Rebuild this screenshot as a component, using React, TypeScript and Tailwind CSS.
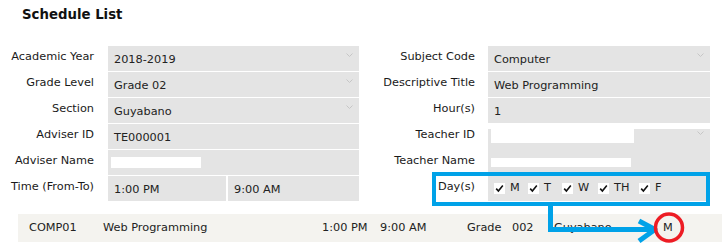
import type { ReactNode } from 'react';

// ─────────────────────────────────────────────────────────────────────────────
// Schedule List — filter form with a single result row and annotations
// ─────────────────────────────────────────────────────────────────────────────

const font = { fontFamily: '"DejaVu Sans", Verdana, sans-serif' };

function Chevron() {
  return (
    <svg width="7" height="5" viewBox="0 0 7 5" className="absolute right-[6px] top-[7px]">
      <polyline points="0.5,0.5 3.5,3.5 6.5,0.5" fill="none" stroke="#c6c6c6" strokeWidth="1" />
    </svg>
  );
}

function Label({ children, right }: { children: ReactNode; right?: boolean }) {
  return (
    <div
      className={`text-right pt-[4px] text-[11.3px] leading-[14px] text-[#1a1a1a] ${right ? 'pr-[13px]' : 'pr-[14px]'}`}
    >
      {children}
    </div>
  );
}

function Field({ children, select }: { children?: ReactNode; select?: boolean }) {
  return (
    <div className="relative h-[25px] bg-[#e4e4e4] pl-[6px] pt-[7px] text-[11.3px] leading-[14px] text-[#222]">
      {children}
      {select && <Chevron />}
    </div>
  );
}

function Redacted({ top, width, height }: { top: string; width: string; height: string }) {
  return (
    <div className="h-[25px] bg-[#e4e4e4] pl-[3px]">
      <div className={`bg-white ${top} ${width} ${height}`} />
    </div>
  );
}

function Check({ label, w }: { label: string; w: string }) {
  return (
    <div className={`flex items-center gap-[5px] ${w}`}>
      <span className="w-[11px] h-[11px] bg-white flex items-center justify-center">
        <svg width="9" height="9" viewBox="0 0 9 9">
          <path d="M1.2 4.6 L3.4 7 L7.8 1.6" fill="none" stroke="#111" strokeWidth="1.6" />
        </svg>
      </span>
      <span>{label}</span>
    </div>
  );
}

export default function App() {
  return (
    <div className="relative w-[722px] h-[250px] bg-white overflow-hidden" style={font}>
      {/* Title */}
      <div className="pt-[7px] pl-[22px] text-[13.3px] leading-[16px] font-bold text-[#111]">Schedule List</div>

      {/* Form */}
      <div className="mt-[23px] grid grid-cols-[108px_251px_129px_222px] auto-rows-[25px] gap-y-px">
        <Label>Academic Year</Label>
        <Field select>2018-2019</Field>
        <Label right>Subject Code</Label>
        <Field select>Computer</Field>

        <Label>Grade Level</Label>
        <Field select>Grade 02</Field>
        <Label right>Descriptive Title</Label>
        <Field>Web Programming</Field>

        <Label>Section</Label>
        <Field select>Guyabano</Field>
        <Label right>Hour(s)</Label>
        <Field>1</Field>

        <Label>Adviser ID</Label>
        <Field>TE000001</Field>
        <Label right>Teacher ID</Label>
        <div className="relative">
          <Redacted top="mt-[5px]" width="w-[143px]" height="h-[14px]" />
          <Chevron />
        </div>

        <Label>Adviser Name</Label>
        <Redacted top="mt-[7px]" width="w-[90px]" height="h-[11px]" />
        <Label right>Teacher Name</Label>
        <Redacted top="mt-[8px]" width="w-[140px]" height="h-[9px]" />

        <Label>Time (From-To)</Label>
        <div className="flex gap-[2px]">
          <div className="w-[118px]">
            <Field>1:00 PM</Field>
          </div>
          <div className="flex-1">
            <Field>9:00 AM</Field>
          </div>
        </div>
        <Label right>Day(s)</Label>
        <div className="h-[25px] bg-[#e4e4e4] pl-[6px] flex items-center text-[11.3px] text-[#222]">
          <Check label="M" w="w-[34px]" />
          <Check label="T" w="w-[34px]" />
          <Check label="W" w="w-[36px]" />
          <Check label="TH" w="w-[41px]" />
          <Check label="F" w="w-[40px]" />
        </div>
      </div>

      {/* Result row */}
      <div className="mt-[13px] ml-[18px] h-[28px] bg-[#f4f3ef] flex items-center pl-[11px] text-[11.3px] text-[#222]">
        <span className="w-[74px]">COMP01</span>
        <span className="w-[219px]">Web Programming</span>
        <span className="w-[58px]">1:00 PM</span>
        <span className="w-[87px]">9:00 AM</span>
        <span className="w-[45px]">Grade</span>
        <span className="w-[42px]">002</span>
        <span className="w-[109px]">Guyabano</span>
        <span>M</span>
      </div>

      {/* Annotations drawn over the page */}
      <svg className="absolute inset-0 pointer-events-none" width="722" height="250" viewBox="0 0 722 250">
        <rect x="434" y="174" width="274" height="30" fill="none" stroke="#00a2e8" strokeWidth="4" />
        <path d="M550.5 204 V229.5 H652" fill="none" stroke="#00a2e8" strokeWidth="5" />
        <polyline points="639,221 655,229.5 639,241" fill="none" stroke="#00a2e8" strokeWidth="5" strokeLinejoin="round" />
        <circle cx="669" cy="227.5" r="13.5" fill="none" stroke="#ed1c24" strokeWidth="3.5" />
      </svg>
    </div>
  );
}
